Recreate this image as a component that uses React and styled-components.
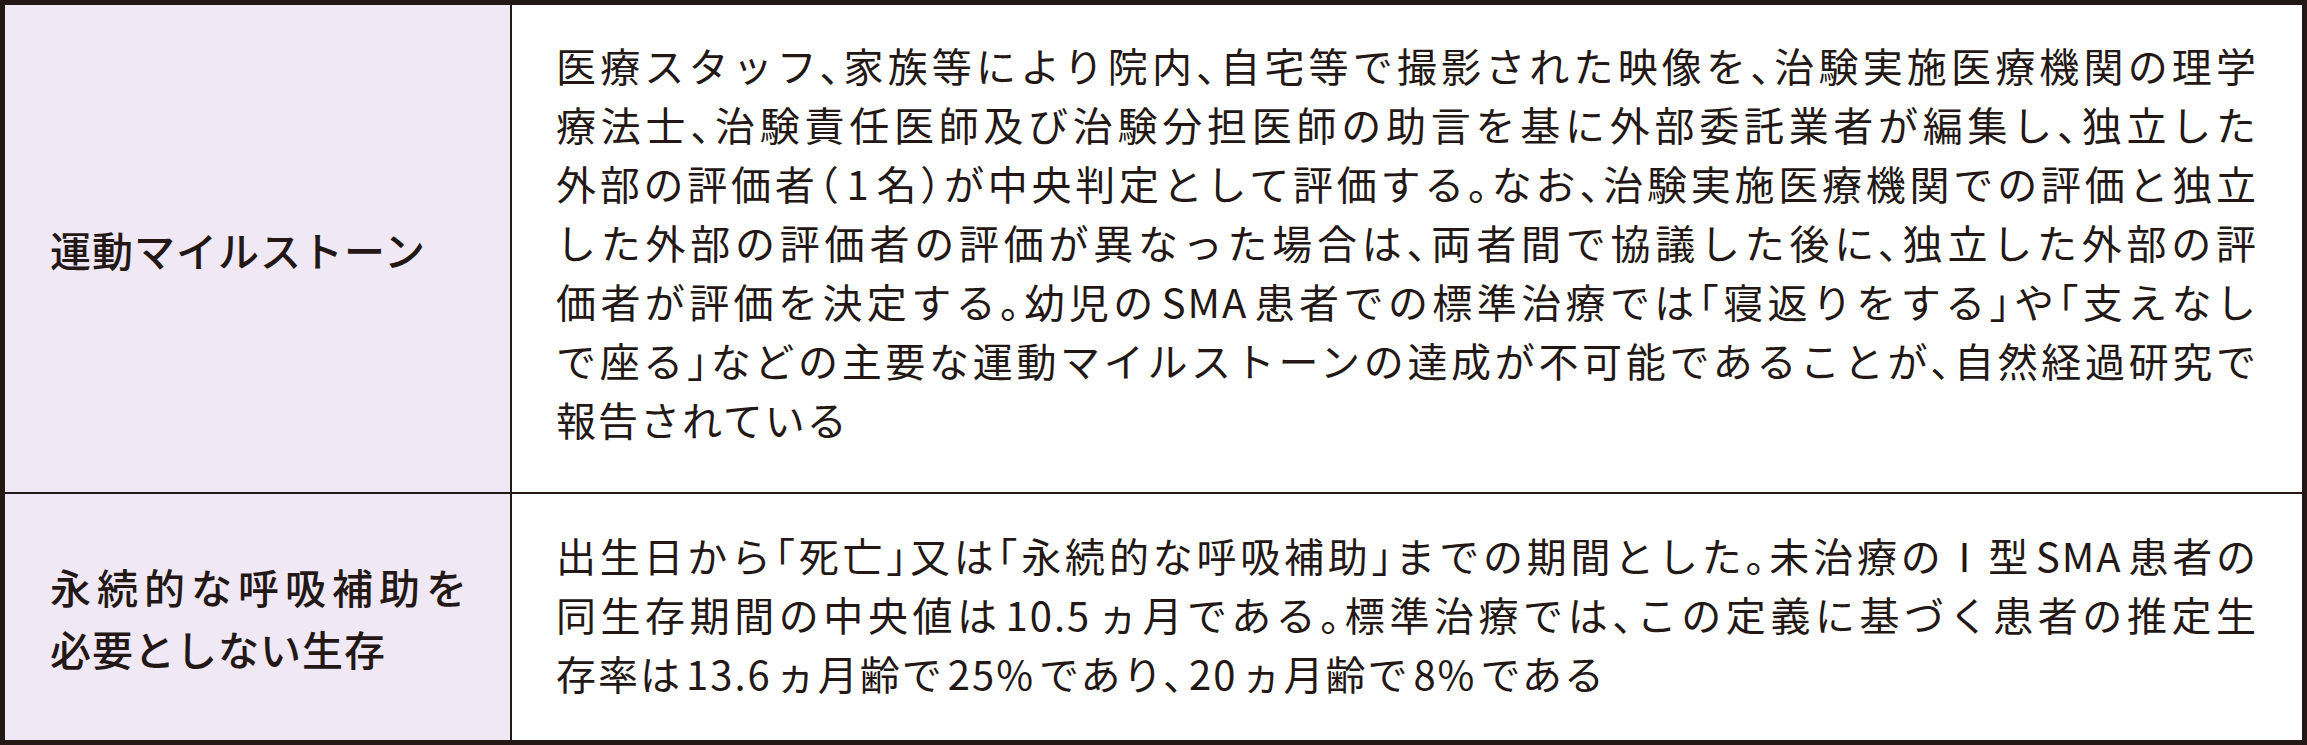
import React from "react";
import styled, { createGlobalStyle } from "styled-components";

const Global = createGlobalStyle`
  html, body { margin: 0; padding: 0; background: #ffffff; }
  body { font-family: "Noto Sans CJK JP", "Noto Sans", sans-serif; color: #231815; }
`;

const Table = styled.div`
  box-sizing: border-box;
  width: 2307px;
  height: 745px;
  border: 5px solid #231815;
  display: grid;
  grid-template-columns: 507px 1fr;
  grid-template-rows: 487px 1fr;
`;

const LabelCell = styled.div`
  box-sizing: border-box;
  background: #f0e9f5;
  border-right: 2px solid #231815;
  border-top: ${(p) => (p.$first ? "none" : "2px solid #231815")};
  display: flex;
  align-items: center;
  padding: 0 42px 0 45px;
`;

const BodyCell = styled.div`
  box-sizing: border-box;
  background: #ffffff;
  border-top: ${(p) => (p.$first ? "none" : "2px solid #231815")};
  display: flex;
  align-items: flex-start;
  padding: ${(p) => p.$pad};
`;

const LabelText = styled.div`
  width: 100%;
  font-size: 41px;
  font-weight: 500;
  line-height: 62px;
  letter-spacing: 1px;
`;

const BodyText = styled.div`
  width: 100%;
  font-size: 40px;
  font-weight: 400;
  line-height: 59px;
  letter-spacing: 2px;
  font-feature-settings: "halt";
`;

const Line = styled.span`
  display: block;
  white-space: nowrap;
  text-align: ${(p) => (p.$last ? "left" : "justify")};
  text-align-last: ${(p) => (p.$last ? "left" : "justify")};
  text-justify: inter-character;
`;

const Latin = styled.span`
  padding: 0 4px;
`;

const withLatin = (text) =>
  text.split(/([0-9A-Za-z.%]+)/).map((part, k) =>
    /^[0-9A-Za-z.%]+$/.test(part) ? <Latin key={k}>{part}</Latin> : part
  );

const rows = [
  {
    label: ["運動マイルストーン"],
    pad: "31px 44px 0 44px",
    body: [
      "医療スタッフ、家族等により院内、自宅等で撮影された映像を、治験実施医療機関の理学",
      "療法士、治験責任医師及び治験分担医師の助言を基に外部委託業者が編集し、独立した",
      "外部の評価者（1名）が中央判定として評価する。なお、治験実施医療機関での評価と独立",
      "した外部の評価者の評価が異なった場合は、両者間で協議した後に、独立した外部の評",
      "価者が評価を決定する。幼児のSMA患者での標準治療では「寝返りをする」や「支えなし",
      "で座る」などの主要な運動マイルストーンの達成が不可能であることが、自然経過研究で",
      "報告されている",
    ],
  },
  {
    label: ["永続的な呼吸補助を", "必要としない生存"],
    pad: "32px 44px 0 44px",
    body: [
      "出生日から「死亡」又は「永続的な呼吸補助」までの期間とした。未治療のⅠ型SMA患者の",
      "同生存期間の中央値は10.5ヵ月である。標準治療では、この定義に基づく患者の推定生",
      "存率は13.6ヵ月齢で25%であり、20ヵ月齢で8%である",
    ],
  },
];

export default function App() {
  return (
    <>
      <Global />
      <Table lang="ja">
        {rows.map((r, i) => (
          <React.Fragment key={i}>
            <LabelCell $first={i === 0}>
              <LabelText>
                {r.label.map((t, j) => (
                  <Line key={j} $last={j === r.label.length - 1}>
                    {t}
                  </Line>
                ))}
              </LabelText>
            </LabelCell>
            <BodyCell $first={i === 0} $pad={r.pad}>
              <BodyText>
                {r.body.map((t, j) => (
                  <Line key={j} $last={j === r.body.length - 1}>
                    {withLatin(t)}
                  </Line>
                ))}
              </BodyText>
            </BodyCell>
          </React.Fragment>
        ))}
      </Table>
    </>
  );
}
